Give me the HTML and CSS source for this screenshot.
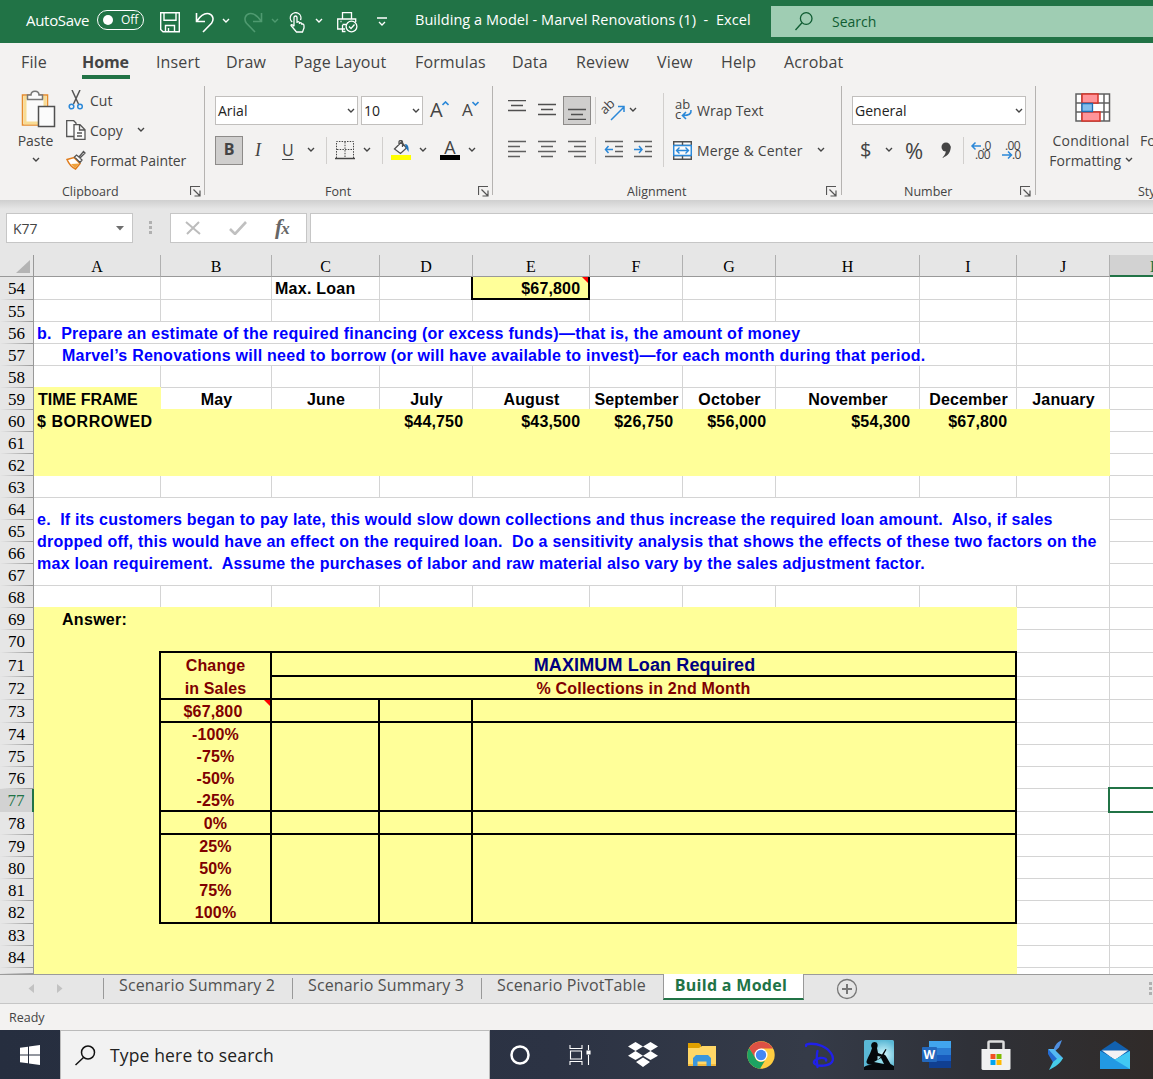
FILE: index.html
```html
<!DOCTYPE html>
<html lang="en">
<head>
<meta charset="utf-8">
<title>Building a Model - Marvel Renovations (1) - Excel</title>
<link rel="stylesheet" href="styles.css">
</head>
<body>
<svg width="0" height="0" class="defs">
  <symbol id="chev" viewBox="0 0 8 6"><path d="M1 1l3 3 3-3" fill="none" stroke="currentColor" stroke-width="1.4"/></symbol>
  <symbol id="launch" viewBox="0 0 11 11"><path d="M.5 9V.5H10M3.500 3.500L9.500 9.500M10 4.500V10H4.500" fill="none" stroke="#555" stroke-width="1.200"/></symbol>
</svg>
<div class="app">
  <header class="titlebar">
    <span class="autosave">AutoSave</span>
    <span class="toggle"><i></i>Off</span>
    <svg width="20" height="21" viewBox="0 0 20 21" fill="none" stroke="#fff" stroke-width="1.400"><path d="M.7.7h18.600v19H3l-2.300-2.300zM4 .7v7.500h12V.7M5.500 19.500v-6h9v6M8.500 19v-3"/></svg>
    <svg width="20" height="21" viewBox="0 0 20 21" fill="none" stroke="#fff" stroke-width="1.600"><path d="M1.500 1v8.500H10M2 9C6 3 10 .8 14 1.800c4.500 1.500 5 6 2.500 9.500L8 20"/></svg>
    <svg class="chev" width="8" height="6"><use href="#chev"/></svg>
    <svg class="dim" width="20" height="21" viewBox="0 0 20 21" fill="none" stroke="currentColor" stroke-width="1.600"><path d="M17.500 1v8.500H9M17 9C13 3 9 .8 5 1.800.5 3.300 0 8 2.500 11.300L11 20"/></svg>
    <svg class="chev dim" width="8" height="6"><use href="#chev"/></svg>
    <svg width="17" height="21" viewBox="0 0 17 21" fill="none" stroke="#fff" stroke-width="1.300"><path d="M3.200 10A5.300 5.300 0 1 1 11.500 8M5 14V5.500a1.500 1.500 0 0 1 3 0V11M8 10c2-1 2.500 0 2.500 2M10.500 11c1.500-.7 2.500 0 2.500 2M13 12c1.500-.3 2 .5 2 2v2l-1.500 4H7.500L2 13.500c0-1.200 1.500-1.500 3 1"/></svg>
    <svg class="chev" width="8" height="6"><use href="#chev"/></svg>
    <svg width="21" height="21" viewBox="0 0 21 21" fill="none" stroke="#fff" stroke-width="1.300"><path d="M5.500 6.500V.7h9v5.800M8 17H.7V7h18v3M3.500 9.500h1M5.500 13v6.500h3M5.500 12.500h4"/><circle cx="14.500" cy="14.500" r="5.400"/><path d="M12 14.500l2 2 3.500-4"/></svg>
    <svg class="more" width="10" height="10" viewBox="0 0 10 10" fill="none" stroke="#fff" stroke-width="1.300"><path d="M0 1h10M2 5l3 3 3-3"/></svg>
    <span class="doc">Building a Model - Marvel Renovations (1)&nbsp; -&nbsp; Excel</span>
    <div class="find"><svg width="18" height="19" viewBox="0 0 18 19" fill="none" stroke="#0f5c32" stroke-width="1.300"><circle cx="11.200" cy="6.500" r="5.800"/><path d="M7 10.700L.5 18"/></svg><span>Search</span></div>
  </header>

  <nav class="tabs"><span>File</span><b>Home</b><span>Insert</span><span>Draw</span><span>Page Layout</span><span>Formulas</span><span>Data</span><span>Review</span><span>View</span><span>Help</span><span>Acrobat</span></nav>

  <section class="ribbon">
    <div class="group clipboard">
      <div class="clip-body">
        <div class="paste">
          <svg width="35" height="39" viewBox="0 0 35 39"><path d="M1.500 5h25v30h-25z" fill="#fbfbfb" stroke="#e58b2b" stroke-width="1.500"/><path d="M4 7.500h20V33H4z" fill="none" stroke="#f8dc94" stroke-width="3"/><path d="M6.500 9.500V5H10c0-5 8-5 8 0h3.500v4.500z" fill="#fbfbfb" stroke="#777" stroke-width="1.500"/><path d="M17.500 16.500h16v20h-16z" fill="#fbfbfb" stroke="#505050" stroke-width="1.500"/></svg>
          <span>Paste</span><svg class="chev" width="8" height="6"><use href="#chev"/></svg>
        </div>
        <div class="clip-list">
          <div><svg width="20" height="20" viewBox="0 0 20 20" fill="none"><path d="M6 0l6.500 14M14 0L7.500 14" stroke="#555" stroke-width="1.500"/><g stroke="#2b88d8" stroke-width="1.500"><circle cx="5.500" cy="16.500" r="2.300"/><circle cx="14" cy="16.500" r="2.300"/></g></svg><span>Cut</span></div>
          <div><svg width="20" height="20" viewBox="0 0 20 20" fill="#fbfbfb" stroke="#555" stroke-width="1.300"><path d="M.7.7h7L10 3v13.500H.7z"/><path d="M8 4.700h6l5 5v9.600H8zM13.500 5v5H19M11 13h5M11 16h5"/></svg><span>Copy</span><svg class="chev cc" width="8" height="6"><use href="#chev"/></svg></div>
          <div><svg width="20" height="20" viewBox="0 0 20 20"><path d="M1 9.500l7-2 6 6-4.500 5.500C5 17 2.500 13 1 9.500z" fill="#fff" stroke="#e07b1a" stroke-width="1.500"/><path d="M5 14l8-.500-4 5z" fill="#f0a23c"/><path d="M8.500 7l2-2 2.500 2L17.500 1.500 19 3l-5 5 2 2-2 2.500z" fill="#fbfbfb" stroke="#555" stroke-width="1.300"/></svg><span class="painter">Format Painter</span></div>
        </div>
      </div>
      <footer><span>Clipboard</span><svg width="11" height="11"><use href="#launch"/></svg></footer>
    </div>
    <i class="rule"></i>
    <div class="group font">
      <div class="tools font-top">
        <div class="box">Arial<svg class="chev" width="8" height="6"><use href="#chev"/></svg></div>
        <div class="box">10<svg class="chev" width="8" height="6"><use href="#chev"/></svg></div>
        <span class="grow">A<svg width="7" height="5" viewBox="0 0 7 5"><path d="M.5 4l3-3 3 3" fill="none" stroke="#2b88d8" stroke-width="1.600"/></svg></span>
        <span class="grow small">A<svg width="7" height="5" viewBox="0 0 7 5"><path d="M.5 1l3 3 3-3" fill="none" stroke="#2b88d8" stroke-width="1.600"/></svg></span>
      </div>
      <div class="tools font-bottom">
        <span class="pressed bold">B</span><span class="ital">I</span><span class="under">U</span>
        <svg class="chev" width="8" height="6"><use href="#chev"/></svg><i class="sep"></i>
        <svg width="20" height="20" viewBox="0 0 20 20" fill="none" stroke="#444"><path d="M1.500 18V1.500h17V18M10 2v16M2 9.500h17" stroke-dasharray="1.500 1.200"/><path d="M0 18.500h20" stroke-width="1.500"/></svg>
        <svg class="chev" width="8" height="6"><use href="#chev"/></svg><i class="sep"></i>
        <svg width="20" height="20" viewBox="0 0 20 20" fill="none"><path d="M0 15h20v5H0z" fill="#ff0"/><path d="M3.500 9l7-7 5 6-6 5.500zM8 5V2c0-2 3.500-2 3.500 0v5" fill="#fbfbfb" stroke="#505050" stroke-width="1.300"/><path d="M14 4c3 0 4 3 3.500 8L15 8z" fill="#2174bb"/></svg>
        <svg class="chev" width="8" height="6"><use href="#chev"/></svg>
        <span class="ink">A</span>
        <svg class="chev" width="8" height="6"><use href="#chev"/></svg>
      </div>
      <footer><span>Font</span><svg width="11" height="11"><use href="#launch"/></svg></footer>
    </div>
    <i class="rule"></i>
    <div class="group align">
      <div class="align-body">
        <div class="tools al al-top">
          <svg width="18" height="20" viewBox="0 0 18 20" stroke="#505050" stroke-width="1.500"><path d="M0 .5h18M3 5.500h12M0 10.500h18"/></svg>
          <svg width="18" height="20" viewBox="0 0 18 20" stroke="#505050" stroke-width="1.500"><path d="M0 4.500h18M3 9.500h12M0 14.500h18"/></svg>
          <span class="pressed"><svg width="18" height="20" viewBox="0 0 18 20" stroke="#505050" stroke-width="1.500"><path d="M0 9.500h18M3 14.500h12M0 19.500h18"/></svg></span>
          <i class="sep"></i>
          <svg class="turn" width="21" height="21" viewBox="0 0 21 21"><text x="1" y="15" transform="rotate(-45 1 15)" class="tiny">ab</text><path d="M7 20L19.500 7.500M14 6.500H20V12" fill="none" stroke="#2b88d8" stroke-width="1.500"/></svg>
          <svg class="chev" width="8" height="6"><use href="#chev"/></svg>
        </div>
        <div class="tools al">
          <svg width="18" height="20" viewBox="0 0 18 20" stroke="#606060" stroke-width="1.500"><path d="M0 1.500h18M0 6.500h12M0 11.500h18M0 16.500h12"/></svg>
          <svg width="18" height="20" viewBox="0 0 18 20" stroke="#606060" stroke-width="1.500"><path d="M0 1.500h18M3 6.500h12M0 11.500h18M3 16.500h12"/></svg>
          <svg class="al-right" width="18" height="20" viewBox="0 0 18 20" stroke="#606060" stroke-width="1.500"><path d="M0 1.500h18M6 6.500h12M0 11.500h18M6 16.500h12"/></svg>
          <i class="sep"></i>
          <svg width="19" height="20" viewBox="0 0 19 20" fill="none" stroke="#606060" stroke-width="1.500"><path d="M1 1.500h18M11 6.500h8M11 11.500h8M1 16.500h18"/><path d="M1 9.500h8M4.500 6L1.500 9.500l3 3.500" stroke="#2b88d8"/></svg>
          <svg width="19" height="20" viewBox="0 0 19 20" fill="none" stroke="#606060" stroke-width="1.500"><path d="M0 1.500h18M11 6.500h7M11 11.500h7M0 16.500h18"/><path d="M0 9.500h8M5 6l3 3.500-3 3.500" stroke="#2b88d8"/></svg>
        </div>
      </div>
      <i class="tall"></i>
      <div class="wraps">
        <div><svg class="wrap" width="19" height="21" viewBox="0 0 19 21"><text x="2" y="9" class="tiny">ab</text><text x="2" y="19" class="tiny">c</text><path d="M18 10c.5 4-2 5.500-8 5.500M13 12l-3.500 3.500L13 19" fill="none" stroke="#2b88d8" stroke-width="1.600"/></svg><span>Wrap Text</span></div>
        <div><svg width="19" height="19" viewBox="0 0 19 19" fill="#fbfbfb"><path d="M.7.7h17.600v17.600H.7zM9.500 1v17M1 4.500h17M1 14.500h17" stroke="#505050" stroke-width="1.400"/><path d="M.7 4.500h17.600v10H.7z" stroke="#2b88d8" stroke-width="1.500"/><path d="M4 9.500h11M6.500 6.500l-3 3 3 3M12.500 6.500l3 3-3 3" stroke="#2b88d8" stroke-width="1.400" fill="none"/></svg><span class="merge">Merge &amp; Center</span><svg class="chev mc" width="8" height="6"><use href="#chev"/></svg></div>
      </div>
      <footer><span>Alignment</span><svg width="11" height="11"><use href="#launch"/></svg></footer>
    </div>
    <i class="rule"></i>
    <div class="group number">
      <div class="tools num-top"><div class="box">General<svg class="chev" width="8" height="6"><use href="#chev"/></svg></div></div>
      <div class="tools num-bottom">
        <span class="sym">$</span><svg class="chev" width="8" height="6"><use href="#chev"/></svg><span class="sym pct">%</span>
        <svg width="11" height="17" viewBox="0 0 11 17"><circle cx="5" cy="5" r="4.500" fill="#444"/><path d="M9.500 4c.8 5-2 10-8.500 12 3-3 4-5 4-9z" fill="#444"/></svg>
        <i class="sep"></i>
        <svg class="decs" width="20" height="21" viewBox="0 0 20 21"><path d="M1 6h9M4.500 2.500L1 6l3.500 3.500" fill="none" stroke="#2b88d8" stroke-width="1.500"/><text x="11" y="9.500" class="dec">.0</text><text x="4" y="19" class="dec">.00</text></svg>
        <svg class="decs" width="20" height="21" viewBox="0 0 20 21"><path d="M0 15h9M6 11.500L9.500 15 6 18.500" fill="none" stroke="#2b88d8" stroke-width="1.500"/><text x="3" y="9.500" class="dec">.00</text><text x="10" y="19" class="dec">.0</text></svg>
      </div>
      <footer><span>Number</span><svg width="11" height="11"><use href="#launch"/></svg></footer>
    </div>
    <i class="rule"></i>
    <div class="group styles">
      <div class="style-body">
        <div class="cond">
          <svg width="36" height="29" viewBox="0 0 36 29"><path d="M1 1h33.500v27H1zM1 10h33.500M1 19h33.500M7 1v27M29 1v27" fill="#fff" stroke="#606060" stroke-width="1.500"/><path d="M7 1h16v9H7zM7 19h18v9H7z" fill="#ff9499" stroke="#d6342a" stroke-width="1.500"/><path d="M7 10.500h10.500v8H7z" fill="#83beec" stroke="#1f6fb5" stroke-width="1.300"/></svg>
          <span class="cond-a">Conditional</span><span>Formatting <svg class="chev" width="8" height="6"><use href="#chev"/></svg></span>
        </div>
        <div class="fmt"><span>Format as</span><span>Table</span></div>
      </div>
      <footer><span>Styles</span></footer>
    </div>
  </section>

  <section class="formula">
    <div class="namebox"><span>K77</span><svg width="8" height="5"><path d="M0 0h8L4 4.500z" fill="#6e6e6e"/></svg></div>
    <svg class="dots" width="4" height="15" fill="#b0b0b0"><path d="M0 0h3v3H0zM0 5h3v3H0zM0 10h3v3H0z"/></svg>
    <div class="fx">
      <svg width="16" height="14" viewBox="0 0 16 14"><path d="M1 1l14 12M14 1L2 13" stroke="#bcbcbc" stroke-width="2"/></svg>
      <svg width="18" height="14" viewBox="0 0 18 14"><path d="M1 8l5 5L17 1" fill="none" stroke="#c0c0c0" stroke-width="2.600"/></svg>
      <span>f<small>x</small></span>
    </div>
    <div class="entry"></div>
  </section>

  <main class="sheet">
    <i class="v cA"></i><i class="v cB"></i><i class="v cC"></i><i class="v cD"></i><i class="v cE"></i><i class="v cF"></i><i class="v cG"></i><i class="v cH"></i><i class="v cI"></i><i class="v cJ"></i>
    <i class="h r54"></i><i class="h r55"></i><i class="h r56"></i><i class="h r57"></i><i class="h r58"></i><i class="h r59"></i><i class="h r60"></i><i class="h r61"></i><i class="h r62"></i><i class="h r63"></i><i class="h r64"></i><i class="h r65"></i><i class="h r66"></i><i class="h r67"></i><i class="h r68"></i><i class="h r69"></i><i class="h r70"></i><i class="h r71"></i><i class="h r72"></i><i class="h r73"></i><i class="h r74"></i><i class="h r75"></i><i class="h r76"></i><i class="h r77"></i><i class="h r78"></i><i class="h r79"></i><i class="h r80"></i><i class="h r81"></i><i class="h r82"></i><i class="h r83"></i><i class="h r84"></i>

    <span class="ch corner"><svg width="14" height="13"><path d="M14 0v13H0z" fill="#b4b4b4"/></svg></span>
    <span class="ch cA">A</span><span class="ch cB">B</span><span class="ch cC">C</span><span class="ch cD">D</span><span class="ch cE">E</span><span class="ch cF">F</span><span class="ch cG">G</span><span class="ch cH">H</span><span class="ch cI">I</span><span class="ch cJ">J</span><span class="ch cK on">K</span>
    <span class="rh r54">54</span><span class="rh r55">55</span><span class="rh r56">56</span><span class="rh r57">57</span><span class="rh r58">58</span><span class="rh r59">59</span><span class="rh r60">60</span><span class="rh r61">61</span><span class="rh r62">62</span><span class="rh r63">63</span><span class="rh r64">64</span><span class="rh r65">65</span><span class="rh r66">66</span><span class="rh r67">67</span><span class="rh r68">68</span><span class="rh r69">69</span><span class="rh r70">70</span><span class="rh r71">71</span><span class="rh r72">72</span><span class="rh r73">73</span><span class="rh r74">74</span><span class="rh r75">75</span><span class="rh r76">76</span><span class="rh r77 on">77</span><span class="rh r78">78</span><span class="rh r79">79</span><span class="rh r80">80</span><span class="rh r81">81</span><span class="rh r82">82</span><span class="rh r83">83</span><span class="rh r84">84</span><span class="rh r85"></span>

    <span class="c r54 cC max">Max. Loan</span>
    <span class="c num loan r54 cE">$67,800<i class="note"></i></span>

    <span class="c q q1 r56">b.&nbsp; Prepare an estimate of the required financing (or excess funds)—that is, the amount of money</span>
    <span class="c q q2 r57">Marvel’s Renovations will need to borrow (or will have available to invest)—for each month during that period.</span>

    <i class="fill fill-label"></i><i class="fill fill-borrow"></i>
    <span class="c r59 cA frame-label">TIME FRAME</span>
    <span class="c mid r59 cB">May</span><span class="c mid r59 cC">June</span><span class="c mid r59 cD">July</span><span class="c mid r59 cE">August</span><span class="c mid r59 cF">September</span><span class="c mid r59 cG">October</span><span class="c mid r59 cH">November</span><span class="c mid r59 cI">December</span><span class="c mid r59 cJ">January</span>
    <span class="c r60 cA borrowed">$ BORROWED</span>
    <span class="c num r60 cD">$44,750</span><span class="c num r60 cE">$43,500</span><span class="c num r60 cF">$26,750</span><span class="c num r60 cG">$56,000</span><span class="c num r60 cH">$54,300</span><span class="c num r60 cI">$67,800</span>

    <div class="q note-e"><p class="e1">e.&nbsp; If its customers began to pay late, this would slow down collections and thus increase the required loan amount.&nbsp; Also, if sales</p><p>dropped off, this would have an effect on the required loan.&nbsp; Do a sensitivity analysis that shows the effects of these two factors on the</p><p>max loan requirement.&nbsp; Assume the purchases of labor and raw material also vary by the sales adjustment factor.</p></div>

    <i class="fill fill-answer"></i>
    <span class="c answer r69 cA">Answer:</span>
    <i class="frame"></i>
    <span class="t head">Change<br>in Sales</span>
    <span class="t r71 wide navy">MAXIMUM Loan Required</span>
    <span class="t r72 wide coll">% Collections in 2nd Month</span>
    <span class="t r73 cB shift">$67,800<i class="note"></i></span><i class="t r73 cC"></i><i class="t r73 cD"></i><i class="t r73 rest"></i>
    <div class="t band-a cB"><span>-100%</span><span>-75%</span><span>-50%</span><span>-25%</span></div><i class="t band-a cC"></i><i class="t band-a cD"></i><i class="t band-a rest"></i>
    <span class="t r78 cB">0%</span><i class="t r78 cC"></i><i class="t r78 cD"></i><i class="t r78 rest"></i>
    <div class="t band-b cB"><span>25%</span><span>50%</span><span>75%</span><span>100%</span></div><i class="t band-b cC"></i><i class="t band-b cD"></i><i class="t band-b rest"></i>
    <i class="selected"></i>
  </main>

  <nav class="sheets">
    <svg class="arrows" width="36" height="12"><path d="M6 1v9L.5 5.500zM29 1v9l5.500-4.500z" fill="#c2c2c2"/></svg>
    <span class="st">Scenario Summary 2</span><span class="st">Scenario Summary 3</span><span class="st pivot">Scenario PivotTable</span><b>Build a Model</b>
    <svg class="plus" width="22" height="22" fill="none" stroke="#777"><circle cx="11" cy="11" r="9.500" stroke-width="1.300"/><path d="M6 11h10M11 6v10" stroke-width="2"/></svg>
    <svg class="grip" width="4" height="15" fill="#b0b0b0"><path d="M0 0h3v3H0zM0 5h3v3H0zM0 10h3v3H0z"/></svg>
  </nav>
  <div class="status">Ready</div>

  <footer class="taskbar">
    <div class="start"><svg width="20" height="20" viewBox="0 0 20 20" fill="#fff"><path d="M0 2.800L8 1.700v7.800H0zM9 1.500L20 0v9.500H9zM0 10.500h8v7.800L0 17.200zM9 10.500h11V20L9 18.500z"/></svg></div>
    <div class="type"><svg width="21" height="21" viewBox="0 0 21 21" fill="none" stroke="#111" stroke-width="1.500"><circle cx="13" cy="7.500" r="6.500"/><path d="M8.500 12.500L.5 20"/></svg><span>Type here to search</span></div>
    <div class="apps">
      <svg width="30" height="30" viewBox="0 0 30 30"><circle cx="15" cy="15" r="8.500" fill="none" stroke="#fff" stroke-width="2.500"/></svg>
      <svg width="30" height="30" viewBox="0 0 30 30" fill="none" stroke="#fff" stroke-width="1.100"><path d="M5 5v3.500h12V5M5 25v-3.500h12V25M5.500 11h11v8h-11zM23.500 5v5M23.500 15v10"/><path d="M22 11h3v3h-3z" fill="#fff"/></svg>
      <svg width="30" height="30" viewBox="0 0 30 30" fill="#fff"><path d="M7.500 2L15 6.500 7.500 11 0 6.500zM22.500 2L30 6.500 22.500 11 15 6.500zM7.500 11L15 15.700 7.500 20 0 15.700zM22.500 11L30 15.700 22.500 20 15 15.700zM15 17.500l7 4.500-7 5-7-5z"/></svg>
      <svg width="30" height="30" viewBox="0 0 30 30"><path d="M1 3h11l2 2v6H1z" fill="#e0a000"/><path d="M1 8h11l3-2h14v20H1z" fill="#ffd767"/><path d="M1 24h28v2H1z" fill="#f3b93b"/><path d="M6 26V18l3-3h12l3 3v8h-4.500v-4.500h-9V26z" fill="#3a96dd"/></svg>
      <svg width="30" height="30" viewBox="0 0 30 30"><circle cx="15" cy="15" r="13.700" fill="#ffcd40"/><path d="M3.100 8.100A13.700 13.700 0 0 1 26.900 8.500H15L9 18.500z" fill="#dd5144"/><path d="M3.100 8.100L9.400 18.300c2 4 6 4.500 9.500 2.500L14 28.700A13.700 13.700 0 0 1 3.100 8.100z" fill="#1da362"/><circle cx="15" cy="15" r="6.500" fill="#fff"/><circle cx="15" cy="15" r="5.200" fill="#4587f3"/></svg>
      <svg width="30" height="30" viewBox="0 0 30 30" fill="none" stroke="#2020ea" stroke-width="2.300" stroke-linecap="round"><path d="M1 6C0 3 10 3 17 6c8 3.500 13 11 10 16-3 4-13 5-17 2-2.500-2-.5-5 5-6 4-.5 7 1 6 2.500M12.500 11c-1 4-1 9 0 16"/></svg>
      <svg width="30" height="30" viewBox="0 0 30 30"><defs><radialGradient id="sky" cx=".65"><stop stop-color="#d8faff"/><stop offset="1" stop-color="#5ab8d5"/></radialGradient></defs><rect width="30" height="30" rx="1.500" fill="url(#sky)"/><path d="M0 27c3-2 7-2.500 10-2-5 0-9-1-7-5 1-3 3-6 4-9L8 8C6 5 8 2 10.500 2c3 0 4 3 2.500 6l1 5 4 1.500 3.500-5.500 1 .6L18.500 17l-5-1v4l5-5c2-1 3 0 4 2l4 7 3.500 2v4H0z" fill="#05090c"/><path d="M10 22l7-4 3 6z" fill="#8edceb"/></svg>
      <svg width="30" height="30" viewBox="0 0 30 30"><path d="M7 1h22v7H7z" fill="#41a5ee"/><path d="M7 8h22v7H7z" fill="#2b7cd3"/><path d="M7 15h22v6H7z" fill="#185abd"/><path d="M7 21h22v7H7z" fill="#103f91"/><rect y="7" width="15" height="15" rx="1" fill="#2368bd"/><text x="1.500" y="18.500" class="word">W</text></svg>
      <svg width="30" height="30" viewBox="0 0 30 30"><path d="M7.500 9V2.500Q7.500 1.500 9 1.500h12q1.500 0 1.500 1V9" fill="none" stroke="#dedede" stroke-width="2.500"/><path d="M.5 9h29v19.500q0 1.500-2 1.500h-25q-2 0-2-1.500z" fill="#f1f1f1"/><path d="M9.500 14h5v5h-5z" fill="#f25022"/><path d="M15.500 14h5v5h-5z" fill="#7fba00"/><path d="M9.500 20h5v5h-5z" fill="#00a4ef"/><path d="M15.500 20h5v5h-5z" fill="#ffb900"/></svg>
      <svg width="30" height="30" viewBox="0 0 30 30"><path d="M22 0c-1 3-2 5-3 7.500l-5 4.500c-1-5 3-10 8-12z" fill="#4f8fe0"/><path d="M8 9h6l9 9-5 5z" fill="#54b8f2"/><path d="M8 9l10 11-4 4-6-10z" fill="#246bd0"/><path d="M23 18c-2 5-8 9-14 12l4-8 5-4z" fill="#47cce9"/></svg>
      <svg width="30" height="30" viewBox="0 0 30 30"><path d="M0 11L15 1l15 10v6H0z" fill="#1261af"/><path d="M2 10.500h26L15 20z" fill="#f2f2f4"/><path d="M0 11l15 8.500L30 11v18H0z" fill="#2aa7ea"/><path d="M30 11L9 23l15 6h6z" fill="#41c8f3"/><path d="M0 11l30 18H0z" fill="#2299e3"/></svg>
    </div>
  </footer>
</div>
</body>
</html>
```
FILE: styles.css
```css
* { box-sizing: border-box; }
body { margin: 0; overflow: hidden; }
.defs { position: absolute; }
.app { width: 1153px; height: 1079px; display: flex; flex-direction: column; overflow: hidden; font-family: "Open Sans", "Noto Sans", sans-serif; font-size: 14px; color: #444; background: #f3f2f1; }
svg { display: block; flex: none; }
i { font-style: normal; }
.chev { color: #444; }

/* title bar */
.titlebar { height: 43px; flex: none; background: #217346; color: #fff; display: grid; grid-template-columns: 71px 63px 35px 27px 22px 27px 18px 26px 22px 40px 38px 356px 382px; padding-left: 26px; align-items: center; padding-bottom: 1px; white-space: nowrap; }
.titlebar > svg { margin-top: 3px; }
.titlebar .chev { color: #fff; margin-top: 0; }
.titlebar .dim { color: #4f9a70; }
.titlebar .more { margin-top: 1px; }
.autosave { letter-spacing: -.3px; font-size: 15px; margin-top: -2px; }
.toggle { width: 47px; height: 20px; border: 1.300px solid #fff; border-radius: 10px; font-size: 12px; display: flex; align-items: center; gap: 8px; padding-left: 5px; margin-top: -2px; line-height: 16px; }
.toggle i { width: 10px; height: 10px; border-radius: 50%; background: #fff; }
.doc { font-size: 14.500px; letter-spacing: .05px; margin-top: -3px; }
.find { height: 31px; margin-top: 1px; background: #9fcdb3; color: #0f5c32; display: flex; align-items: center; gap: 19px; padding-left: 24px; }

/* ribbon tabs */
.tabs { height: 43px; flex: none; display: grid; grid-template-columns: 61px 74px 70px 68px 121px 97px 64px 81px 64px 63px 100px; padding-left: 21px; font-size: 16px; line-height: 39px; letter-spacing: .15px; white-space: nowrap; }
.tabs b { width: 48px; height: 36px; border-bottom: 4px solid #217346; letter-spacing: -.1px; }

/* ribbon */
.ribbon { height: 114px; flex: none; display: flex; color: #444; line-height: 20px; white-space: nowrap; }
.rule { width: 1px; height: 109px; background: #b5b3b1; flex: none; }
.group { flex: none; display: flex; flex-direction: column; padding-top: 4px; }
.group footer { height: 20px; margin-top: 10px; font-size: 12.500px; display: grid; align-items: center; }
.group footer span { padding-top: 2px; }
.clipboard { width: 204px; }
.clipboard footer { grid-template-columns: 128px 20px; padding-left: 62px; }
.clip-body { display: flex; height: 80px; }
.paste { width: 66px; padding-left: 5px; display: flex; flex-direction: column; align-items: center; }
.paste svg:first-child { margin-left: 6px; }
.paste span { margin-top: 2px; }
.paste .chev { margin-top: 6px; }
.clip-list { margin-top: -5px; }
.clip-list div { height: 30px; display: flex; align-items: center; gap: 4px; }
.clip-list span { padding-top: 2px; }
.painter { letter-spacing: -.1px; }
.cc { margin-left: 10px; }
.tools { height: 40px; display: grid; align-items: center; flex: none; }
.box { height: 29px; background: #fff; border: 1px solid #c1bfbd; display: flex; align-items: center; justify-content: space-between; padding: 1px 2px 0 2px; color: #222; }
.sep { width: 1px; height: 27px; background: #d1cfcd; }
.pressed { width: 28px; height: 29px; background: #cfcecd; border: 1px solid #8d8b89; display: grid; place-items: center; }
.font { width: 287px; }
.font footer { grid-template-columns: 153px 20px; padding-left: 120px; }
.font-top { grid-template-columns: 143px 62px 26px 30px; column-gap: 3px; padding-left: 10px; }
.font-top .grow:nth-child(3) { margin-left: 4px; }
.grow { display: flex; font-size: 20px; line-height: 24px; margin-left: 7px; }
.grow svg { margin: 3px 0 0 -1px; }
.grow.small { font-size: 17px; }
.font-bottom { grid-template-columns: 39px 27px 26px 19px 9px 28px 19px 9px 28px 21px 28px 10px; padding-left: 10px; font-size: 16px; }
.bold { font-weight: 700; padding-bottom: 2px; }
.ital { font: italic 18px "Liberation Serif", serif; padding-left: 1px; }
.under { text-decoration: underline; text-underline-offset: 3px; padding-left: 1px; }
.ink { width: 20px; height: 20px; border-bottom: 5px solid #000; text-align: center; font-size: 18px; line-height: 14px; }
.align { width: 348px; display: grid; grid-template-columns: 170px 10px 168px; grid-template-rows: 80px 30px; }
.align footer { grid-column: 1 / 4; grid-template-columns: 199px 20px; padding-left: 134px; }
.al { grid-template-columns: 30px 25px 32px 9px 30px 20px; padding-left: 15px; }
.al-top { grid-template-columns: 30px 25px 32px 9px 25px 20px; }
.al-right { margin-left: 5px; }
.turn, .wrap, .decs { overflow: visible; }
.tall { width: 1px; height: 74px; margin: 3px 0; background: #d1cfcd; }
.tiny { font: 13px "Open Sans", sans-serif; fill: #444; }
.wraps > div { height: 40px; display: flex; align-items: center; gap: 5px; }
.wraps span { padding-top: 1px; }
.merge { letter-spacing: .2px; }
.mc { margin-left: 9px; }
.number { width: 193px; }
.number footer { grid-template-columns: 116px 20px; padding-left: 62px; }
.num-top { grid-template-columns: 174px; padding-left: 10px; }
.num-bottom { grid-template-columns: 25px 20px 36px 22px 8px 31px 24px; padding-left: 18px; }
.sym { font-size: 20px; }
.sym.pct { font-size: 22px; letter-spacing: -1px; }
.dec { font: 12px "Open Sans", sans-serif; fill: #444; letter-spacing: -.6px; }
.styles { width: 117px; overflow: hidden; }
.styles footer { padding-left: 102px; }
.style-body { display: flex; height: 80px; }
.cond { width: 98px; padding: 3px 0 0 12px; display: flex; flex-direction: column; align-items: center; flex: none; }
.cond > svg { margin: 0 0 9px 3px; }
.cond-a { letter-spacing: .2px; }
.cond .chev { display: inline-block; vertical-align: 3px; }
.fmt { padding: 41px 0 0 6px; display: flex; flex-direction: column; align-items: center; }

/* formula bar */
.formula { height: 55px; flex: none; background: linear-gradient(#cfcfcf, #e6e6e6 9px); display: flex; padding: 13px 0 0 6px; }
.formula > div { height: 30px; background: #fff; border: 1px solid #c6c6c6; display: flex; align-items: center; }
.formula .namebox { width: 127px; padding: 0 8px 0 6px; justify-content: space-between; }
.dots { margin: 8px 17px 0 16px; }
.formula .fx { width: 137px; padding-left: 14px; gap: 28px; }
.fx span { font: italic 700 22px "Liberation Serif", serif; color: #666; line-height: 24px; letter-spacing: -1px; }
.fx small { font-size: 17px; }
.formula .entry { flex: 1; margin-left: 3px; border-right: 0; }

/* worksheet */
.sheet { height: 719px; flex: none; overflow: hidden; background: #fff; display: grid; grid-template-columns: 34px 127px 111px 108px 93px 117px 93px 93px 144px 97px 93px 43px; grid-template-rows: 22px 23px repeat(15, 22px) 23px 24px 23px 23px 22px 22px 22px 23px 23px 22px 22px 22px 23px 22px 22px 6px; font: 700 16px/21px "Liberation Sans", Arial, sans-serif; letter-spacing: .15px; color: #000; white-space: nowrap; }
.cA { grid-column: 2; } .cB { grid-column: 3; } .cC { grid-column: 4; } .cD { grid-column: 5; } .cE { grid-column: 6; } .cF { grid-column: 7; } .cG { grid-column: 8; } .cH { grid-column: 9; } .cI { grid-column: 10; } .cJ { grid-column: 11; } .cK { grid-column: 12; }
.r54 { grid-row: 2; } .r55 { grid-row: 3; } .r56 { grid-row: 4; } .r57 { grid-row: 5; } .r58 { grid-row: 6; } .r59 { grid-row: 7; } .r60 { grid-row: 8; } .r61 { grid-row: 9; } .r62 { grid-row: 10; } .r63 { grid-row: 11; } .r64 { grid-row: 12; } .r65 { grid-row: 13; } .r66 { grid-row: 14; } .r67 { grid-row: 15; } .r68 { grid-row: 16; } .r69 { grid-row: 17; } .r70 { grid-row: 18; } .r71 { grid-row: 19; } .r72 { grid-row: 20; } .r73 { grid-row: 21; } .r74 { grid-row: 22; } .r75 { grid-row: 23; } .r76 { grid-row: 24; } .r77 { grid-row: 25; } .r78 { grid-row: 26; } .r79 { grid-row: 27; } .r80 { grid-row: 28; } .r81 { grid-row: 29; } .r82 { grid-row: 30; } .r83 { grid-row: 31; } .r84 { grid-row: 32; } .r85 { grid-row: 33; }
.v { grid-row: 2 / -1; border-right: 1px solid #d4d4d4; }
.h { grid-column: 2 / -1; border-bottom: 1px solid #d4d4d4; }
.ch { grid-row: 1; background: #e6e6e6; border-right: 1px solid #b0b0b0; border-bottom: 1px solid #999; font: 16px/24px "Liberation Serif", serif; letter-spacing: 0; text-align: center; }
.ch.on { background: #d2d2d2; border-bottom: 2px solid #217346; border-right: 0; color: #217346; padding-left: 40px; text-align: left; overflow: hidden; }
.corner { grid-column: 1; padding: 5px 0 0 16px; border-right-color: #999; }
.rh { grid-column: 1; background: linear-gradient(90deg, #e6e6e6, #999) bottom / 100% 1px no-repeat, #e6e6e6; border-right: 1px solid #999; font: 17px/23px "Liberation Serif", serif; letter-spacing: 0; text-align: center; align-content: end; overflow: hidden; }
.rh.on { background: #d2d2d2; border-right: 2px solid #217346; color: #217346; }
.c { padding-left: 4px; padding-top: 1px; z-index: 2; }
.c.max { padding-left: 3px; letter-spacing: .25px; }
.c.frame-label { letter-spacing: 0; }
.c.borrowed { padding-left: 3px; letter-spacing: .55px; }
.c.mid { text-align: center; padding-left: 0; }
.c.num { text-align: right; padding-right: 9.800px; }
.c.loan { background: #ff9; border: solid #000; border-width: 0 2px 2px; margin-left: -2px; padding-right: 7.800px; position: relative; }
.note { position: absolute; top: 0; right: 0; width: 6px; height: 6px; background: red; clip-path: polygon(0 0, 100% 0, 100% 100%); }
.q { color: #00f; background: #fff; letter-spacing: .25px; }
.c.q1 { grid-column: 2 / 10; margin: 0 1px 1px 0; padding-left: 3px; letter-spacing: .265px; }
.c.q2 { grid-column: 2 / 11; margin: 0 1px 1px 0; padding-left: 28px; }
.fill { background: #ff9; margin-top: -1px; z-index: 1; }
.fill-label { grid-area: 7 / 2 / 8 / 3; }
.fill-borrow { grid-area: 8 / 2 / 11 / 12; }
.fill-answer { grid-area: 17 / 2 / 34 / 11; }
.note-e { grid-area: 12 / 2 / 16 / 12; margin: 0 1px 1px 0; padding: 11px 0 0 3px; line-height: 22px; z-index: 1; }
.note-e p { margin: 0; }
.note-e .e1 { letter-spacing: .23px; }
.c.answer { padding-left: 28px; letter-spacing: .3px; }
.frame { grid-area: 19 / 3 / 31 / 11; margin: -2px 0 0 -2px; border: 2px solid #000; z-index: 2; }
.t { z-index: 2; border: solid #000; border-width: 0 2px 2px 0; text-align: center; color: #800000; position: relative; line-height: 22px; padding-top: 1px; }
.head { grid-area: 19 / 3 / 21 / 4; line-height: 23px; padding-top: 1px; }
.wide { grid-column: 4 / 11; }
.coll { letter-spacing: .2px; }
.navy { color: #000080; font-size: 18px; letter-spacing: .12px; padding-left: 2px; }
.rest { grid-column: 6 / 11; }
.shift { padding-right: 5px; }
.band-a { grid-row: 22 / 26; }
.band-b { grid-row: 27 / 31; }
.t > span { display: block; height: 22px; }
.selected { grid-area: 25 / 12; border: 2px solid #217346; margin: -2px -3px -1px -2px; z-index: 3; }

/* sheet tabs and status bar */
.sheets { height: 30px; flex: none; background: #e6e6e6; border-top: 1px solid #9b9b9b; border-bottom: 1px solid #c6c6c6; display: flex; font-size: 16px; letter-spacing: .15px; color: #505050; white-space: nowrap; }
.arrows { margin: 8px 39px 0 28px; }
.st { width: 189px; height: 21px; margin-top: 3px; padding-left: 15px; border-left: 1px solid #999; line-height: 15px; }
.pivot { width: 182px; }
.sheets b { width: 141px; height: 26px; margin-top: -1px; background: #fff; border: solid #999; border-width: 0 1px; border-bottom: 2px solid #217346; text-align: center; color: #217346; line-height: 22px; padding-right: 5px; letter-spacing: .3px; }
.plus { margin: 3px 0 0 32px; }
.grip { margin: 7px 0 0 auto; }
.status { height: 26px; flex: none; padding: 0 9px; font-size: 12.500px; line-height: 27px; }

/* taskbar */
.taskbar { height: 49px; flex: none; display: flex; background: linear-gradient(90deg, #262e3f, #2c3344 48%, #353b48 70%, #2f3138 84%, #302b29); }
.start { width: 60px; display: grid; place-items: center; }
.type { width: 430px; background: #f2f2f2; border: 1px solid #bbb; border-bottom: 0; display: flex; align-items: center; gap: 14px; padding-left: 14px; color: #222; font-size: 17.500px; letter-spacing: .15px; }
.apps { display: grid; align-items: center; grid-template-columns: 60px 63px 59px 59px 59px 59px 58px 59px 59px 60px 30px; margin-left: 15px; }
.word { font: 700 12px "Open Sans", sans-serif; fill: #fff; }
```
